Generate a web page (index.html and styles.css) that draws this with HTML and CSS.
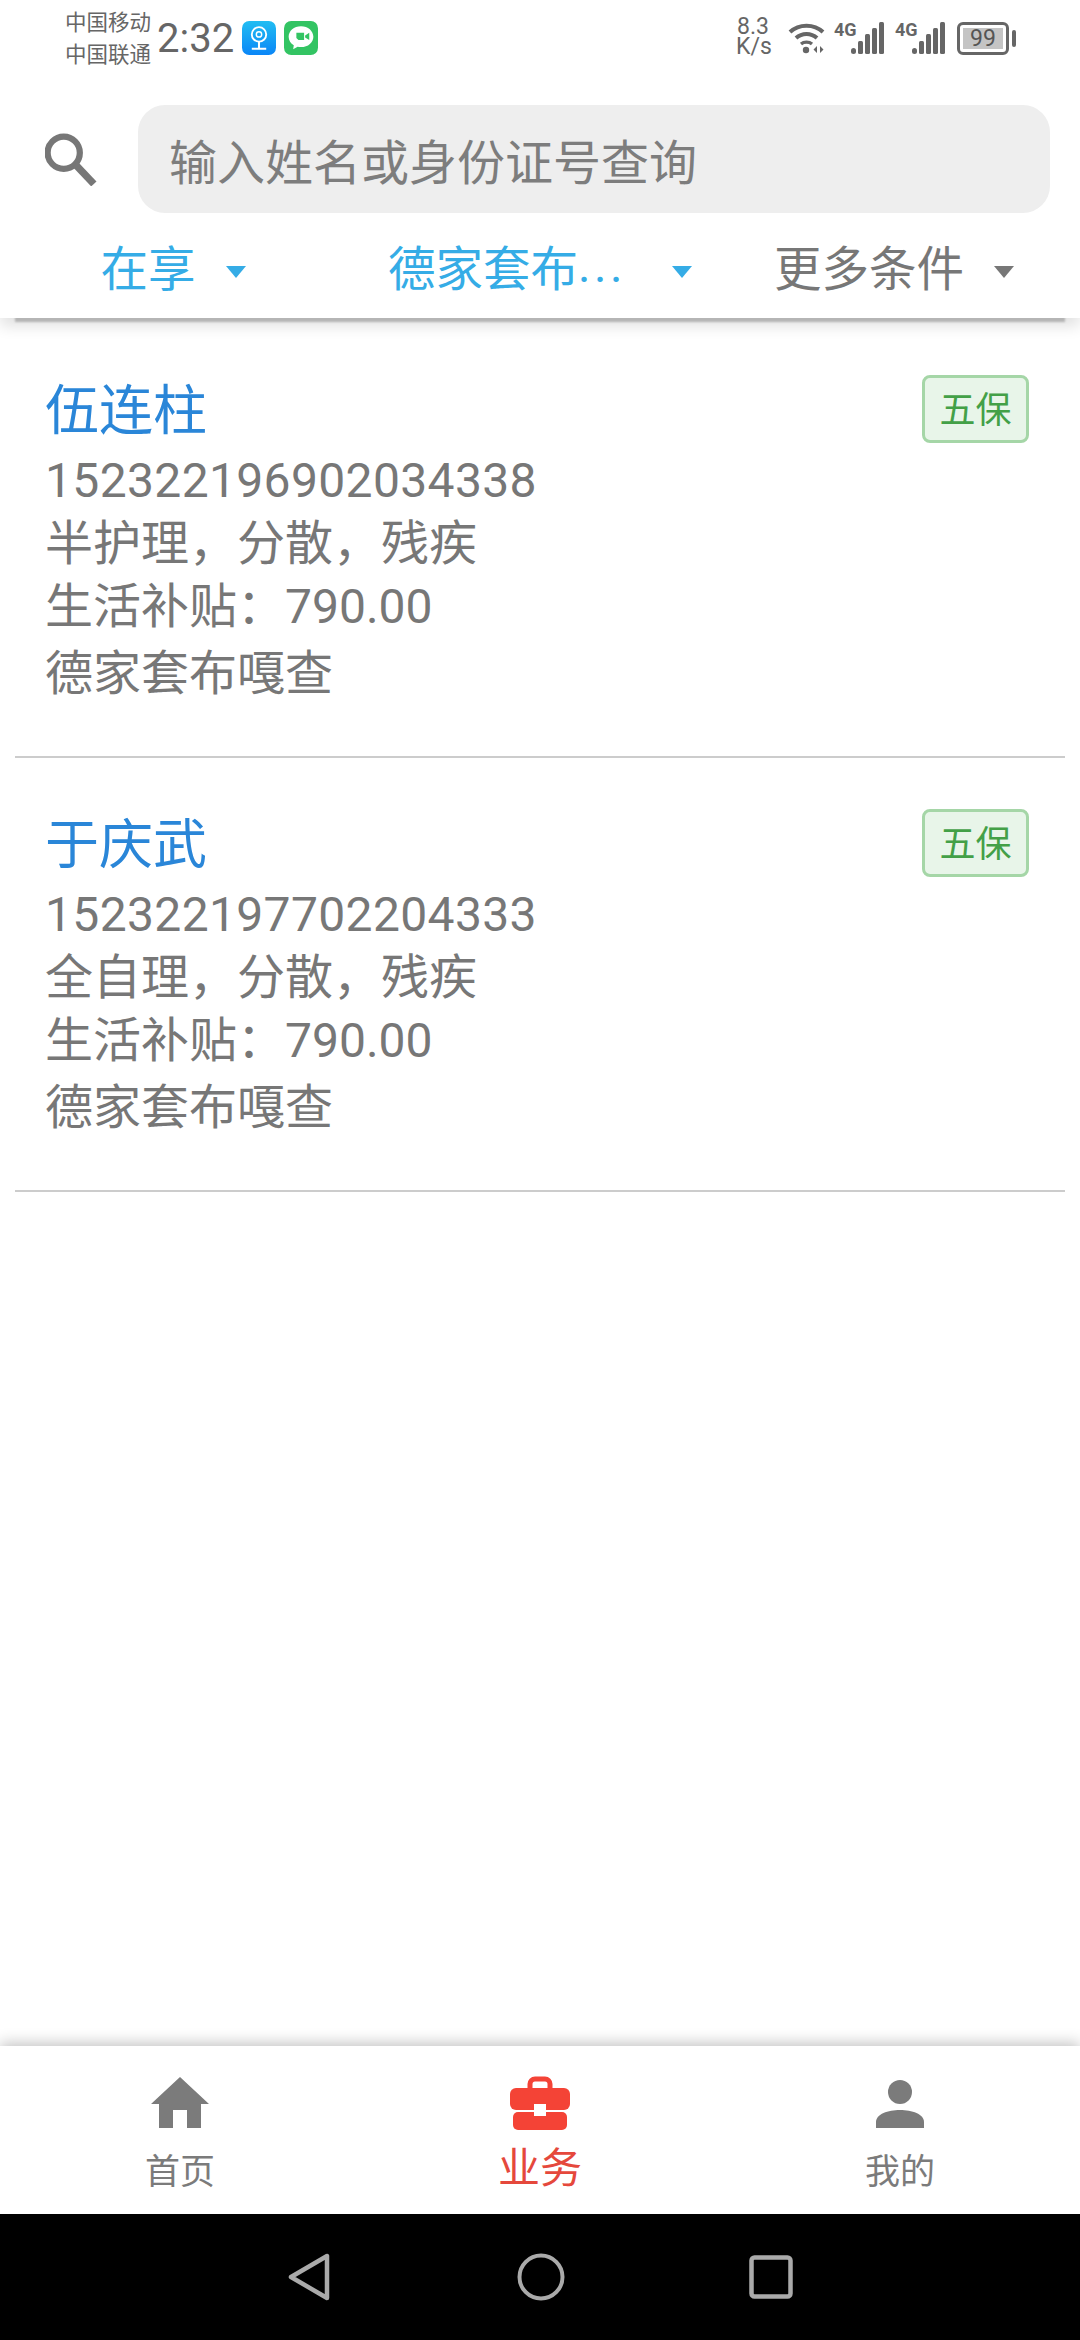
FILE: index.html
```html
<!DOCTYPE html>
<html lang="zh-CN">
<head>
<meta charset="UTF-8">
<meta name="viewport" content="width=device-width, initial-scale=1.0">
<title>五保查询</title>
<link rel="stylesheet" href="styles.css">
</head>
<body>
<div class="page">
    <div class="header">
        <div class="status-bar">
            <div class="status-left">
                <div class="carriers">
                    <div>中国移动</div>
                    <div>中国联通</div>
                </div>
                <div class="clock">2:32</div>
                <svg class="app-icon" viewBox="0 0 33 33">
                    <defs>
                        <linearGradient id="blueFill" x1="0" y1="0" x2="0" y2="1">
                            <stop offset="0" stop-color="#22bdf2"/>
                            <stop offset="1" stop-color="#0a86f7"/>
                        </linearGradient>
                    </defs>
                    <rect width="33" height="33" rx="7" fill="url(#blueFill)"/>
                    <circle cx="16.5" cy="13" r="7" fill="none" stroke="#fff" stroke-width="1.8"/>
                    <circle cx="16.5" cy="13" r="2.6" fill="none" stroke="#fff" stroke-width="1.4"/>
                    <path d="M16.5 20v6M9.5 27h14" stroke="#fff" stroke-width="2" fill="none"/>
                </svg>
                <svg class="app-icon" viewBox="0 0 33 33">
                    <rect width="33" height="33" rx="7" fill="#33c463"/>
                    <path d="M16.5 5C9.6 5 4.500 9.500 4.500 15.200c0 3.500 2 6.500 5 8.300l-.6 4 4.300-2.500c1.100.2 2.200.3 3.300.3 6.900 0 12-4.500 12-10.100S23.400 5 16.500 5z" fill="#fff"/>
                    <path d="M12 11.500h7.500v7H14l-2-2zM20.500 14l4-2.500v7l-4-2.500z" fill="#33c463"/>
                </svg>
            </div>
            <div class="status-right">
                <div class="net-speed">
                    <div>8.3</div>
                    <div>K/s</div>
                </div>
                <svg class="wifi" viewBox="0 0 37 32">
                    <path d="M2 10C11 1.500 26 1.500 35 10" fill="none" stroke="#666" stroke-width="4"/>
                    <path d="M8 16c6-5.500 15-5.500 21 0" fill="none" stroke="#666" stroke-width="4"/>
                    <path d="M13 22c3-2.500 8-2.500 11 0" fill="none" stroke="#666" stroke-width="3.400"/>
                    <circle cx="18" cy="28" r="3.200" fill="#666"/>
                    <path d="M29 24v7l-3.500-3.500zM32 24v7l3.500-3.500z" fill="#666"/>
                </svg>
                <div class="signal">
                    <span class="signal-label">4G</span>
                    <svg class="bars" viewBox="0 0 33 32">
                        <rect x="0" y="26" width="5" height="6" rx="2.500" fill="#666"/>
                        <rect x="7" y="19" width="5" height="13" rx="1.500" fill="#666"/>
                        <rect x="14" y="12" width="5" height="20" rx="1.500" fill="#666"/>
                        <rect x="21" y="6" width="5" height="26" rx="1.500" fill="#666"/>
                        <rect x="28" y="0" width="5" height="32" rx="1.500" fill="#666"/>
                    </svg>
                </div>
                <div class="signal second">
                    <span class="signal-label">4G</span>
                    <svg class="bars" viewBox="0 0 33 32">
                        <rect x="0" y="26" width="5" height="6" rx="2.500" fill="#666"/>
                        <rect x="7" y="19" width="5" height="13" rx="1.500" fill="#666"/>
                        <rect x="14" y="12" width="5" height="20" rx="1.500" fill="#666"/>
                        <rect x="21" y="6" width="5" height="26" rx="1.500" fill="#666"/>
                        <rect x="28" y="0" width="5" height="32" rx="1.500" fill="#666"/>
                    </svg>
                </div>
                <div class="battery">
                    <div class="battery-body"><span class="battery-level">99</span></div>
                    <div class="battery-nub"></div>
                </div>
            </div>
        </div>

        <div class="search-row">
            <svg class="search-icon" viewBox="0 0 50 52">
                <circle cx="18" cy="20" r="15.500" fill="none" stroke="#777" stroke-width="6"/>
                <path d="M29 31L47 50" stroke="#777" stroke-width="7" fill="none"/>
            </svg>
            <div class="search-box">输入姓名或身份证号查询</div>
        </div>

        <div class="filters">
            <div class="filter active">在享<span class="caret"></span></div>
            <div class="filter active">德家套布<span class="dots">...</span><span class="caret"></span></div>
            <div class="filter">更多条件<span class="caret"></span></div>
        </div>
    </div>

    <div class="list">
        <div class="item">
            <div class="item-top">
                <div class="name">伍连柱</div>
                <div class="tag">五保</div>
            </div>
            <div class="line id-no">152322196902034338</div>
            <div class="line">半护理，分散，残疾</div>
            <div class="line">生活补贴：790.00</div>
            <div class="line last">德家套布嘎查</div>
        </div>
        <div class="item">
            <div class="item-top">
                <div class="name">于庆武</div>
                <div class="tag">五保</div>
            </div>
            <div class="line id-no">152322197702204333</div>
            <div class="line">全自理，分散，残疾</div>
            <div class="line">生活补贴：790.00</div>
            <div class="line last">德家套布嘎查</div>
        </div>
    </div>

    <div class="tabbar">
        <div class="tab">
            <svg class="tab-icon" viewBox="0 0 60 52">
                <path d="M30 0L59 27H51V51H37V33H23V51H9V27H1Z" fill="#7b7b7b"/>
            </svg>
            <div class="tab-label">首页</div>
        </div>
        <div class="tab current">
            <svg class="tab-icon" viewBox="0 0 60 52">
                <path d="M20 13V7a5 5 0 0 1 5-5h10a5 5 0 0 1 5 5v6" fill="none" stroke="#f44336" stroke-width="5"/>
                <rect x="0" y="11" width="60" height="22" rx="6" fill="#f44336"/>
                <rect x="3" y="35" width="54" height="18" rx="5" fill="#f44336"/>
                <rect x="24" y="27" width="12" height="12" fill="#fff"/>
            </svg>
            <div class="tab-label">业务</div>
        </div>
        <div class="tab">
            <svg class="tab-icon" viewBox="0 0 60 52">
                <circle cx="30" cy="15" r="12" fill="#7b7b7b"/>
                <path d="M6 51V45C6 37 18 33 30 33S54 37 54 45V51Z" fill="#7b7b7b"/>
            </svg>
            <div class="tab-label">我的</div>
        </div>
    </div>

    <div class="navbar">
        <svg class="nav-back" viewBox="0 0 42 48">
            <path d="M3 24L39 3V45Z" fill="none" stroke="#aaa" stroke-width="4.500" stroke-linejoin="round"/>
        </svg>
        <svg class="nav-home" viewBox="0 0 48 48">
            <circle cx="24" cy="24" r="21.500" fill="none" stroke="#aaa" stroke-width="4"/>
        </svg>
        <svg class="nav-recent" viewBox="0 0 44 44">
            <rect x="2.500" y="2.500" width="39" height="39" rx="3" fill="none" stroke="#aaa" stroke-width="4.500"/>
        </svg>
    </div>
</div>
</body>
</html>
```

FILE: styles.css
```css
* {
    box-sizing: border-box;
}
body {
    margin: 0;
    background-color: #fff;
    font-family: Roboto, "Noto Sans CJK SC", sans-serif;
    color: #777;
}
.page {
    width: 1080px;
    height: 2340px;
    display: flex;
    flex-direction: column;
    overflow: hidden;
}

/* top area */
.header {
    height: 318px;
    background-color: #fff;
    position: relative;
    box-shadow: 0 19px 2px -15px #b5b5b5, 0 8px 14px rgba(0, 0, 0, 0.12);
}
.status-bar {
    height: 105px;
    padding: 0 64px 0 65px;
    display: flex;
    justify-content: space-between;
}
.status-left {
    display: flex;
    align-items: flex-start;
}
.carriers {
    width: 92px;
    padding-top: 7px;
    font-size: 21.500px;
    line-height: 32px;
    color: #666;
}
.clock {
    width: 85px;
    padding-top: 14px;
    font-size: 40px;
    line-height: 50px;
    color: #666;
}
.app-icon {
    width: 34px;
    height: 34px;
    margin-top: 21px;
    margin-right: 8px;
}
.status-right {
    display: flex;
    align-items: flex-start;
}
.net-speed {
    width: 34px;
    padding-top: 17px;
    font-size: 23px;
    line-height: 20px;
    color: #666;
    text-align: center;
}
.wifi {
    width: 37px;
    height: 32px;
    margin-top: 22px;
    margin-left: 18px;
}
.signal {
    display: flex;
    margin-top: 22px;
    margin-left: 9px;
}
.signal.second {
    margin-left: 11px;
}
.signal-label {
    width: 17px;
    font-family: "Liberation Sans Narrow", Roboto, sans-serif;
    font-size: 18px;
    line-height: 16px;
    font-weight: 700;
    color: #666;
}
.bars {
    width: 33px;
    height: 32px;
}
.battery {
    display: flex;
    align-items: center;
    margin-top: 22px;
    margin-left: 12px;
}
.battery-body {
    width: 52px;
    height: 33px;
    padding: 3px;
    border: 3px solid #666;
    border-radius: 6px;
}
.battery-level {
    display: block;
    height: 21px;
    background-color: #c4c4c4;
    font-size: 23px;
    line-height: 21px;
    color: #555;
    text-align: center;
}
.battery-nub {
    width: 4px;
    height: 17px;
    margin-left: 3px;
    border-radius: 2px;
    background-color: #666;
}

.search-row {
    height: 108px;
    padding: 0 30px 0 45px;
    display: flex;
    align-items: center;
}
.search-icon {
    width: 52px;
    height: 54px;
    margin-right: 41px;
}
.search-box {
    flex: 1;
    height: 108px;
    padding-left: 31px;
    border-radius: 27px;
    background-color: #eee;
    font-size: 48px;
    line-height: 118px;
    color: #7d7d7d;
}

.filters {
    height: 105px;
    padding-right: 26px;
    display: grid;
    grid-template-columns: 346px 388px 320px;
}
.filter {
    display: flex;
    justify-content: center;
    align-items: center;
    font-size: 47.500px;
    color: #777;
}
.filter.active {
    color: #35ace6;
}
.caret {
    width: 0;
    height: 0;
    margin-top: 12px;
    margin-left: 30px;
    border-left: 10px solid transparent;
    border-right: 10px solid transparent;
    border-top: 12px solid currentColor;
}
.dots {
    letter-spacing: 3.500px;
    margin-right: 16px;
}

/* result list */
.list {
    flex: 1;
    padding-top: 6px;
}
.item {
    height: 434px;
    margin: 0 15px;
    padding: 51px 36px 0 30px;
    border-bottom: 2px solid #ccc;
}
.item-top {
    height: 74px;
    display: flex;
    justify-content: space-between;
    align-items: flex-start;
}
.name {
    padding-top: 3px;
    font-size: 54px;
    line-height: 68px;
    color: #2a86d8;
}
.tag {
    width: 107px;
    height: 68px;
    border: 3px solid #a5d6a7;
    border-radius: 8px;
    background-color: #e8f5e9;
    font-size: 36px;
    line-height: 66px;
    color: #43a047;
    text-align: center;
}
.line {
    font-size: 48px;
    line-height: 63px;
    color: #777;
}
.line.id-no {
    letter-spacing: 0.350px;
}
.line.last {
    line-height: 72px;
}

/* bottom tabs */
.tabbar {
    height: 168px;
    background-color: #fff;
    position: relative;
    box-shadow: 0 -3px 14px rgba(0, 0, 0, 0.24);
    display: grid;
    grid-template-columns: repeat(3, 360px);
}
.tab {
    padding-top: 30px;
    display: flex;
    flex-direction: column;
    align-items: center;
    color: #7b7b7b;
}
.tab-icon {
    width: 60px;
    height: 54px;
}
.tab-label {
    margin-top: 20px;
    font-size: 35px;
    line-height: 46px;
}
.tab.current {
    color: #e5483c;
}
.tab.current .tab-label {
    margin-top: 12px;
    font-size: 42px;
    line-height: 54px;
}

/* android nav */
.navbar {
    height: 126px;
    padding-left: 288px;
    background-color: #000;
    display: flex;
    align-items: center;
}
.nav-back {
    width: 42px;
    height: 48px;
}
.nav-home {
    width: 48px;
    height: 48px;
    margin-left: 187px;
}
.nav-recent {
    width: 44px;
    height: 44px;
    margin-left: 184px;
}
```
